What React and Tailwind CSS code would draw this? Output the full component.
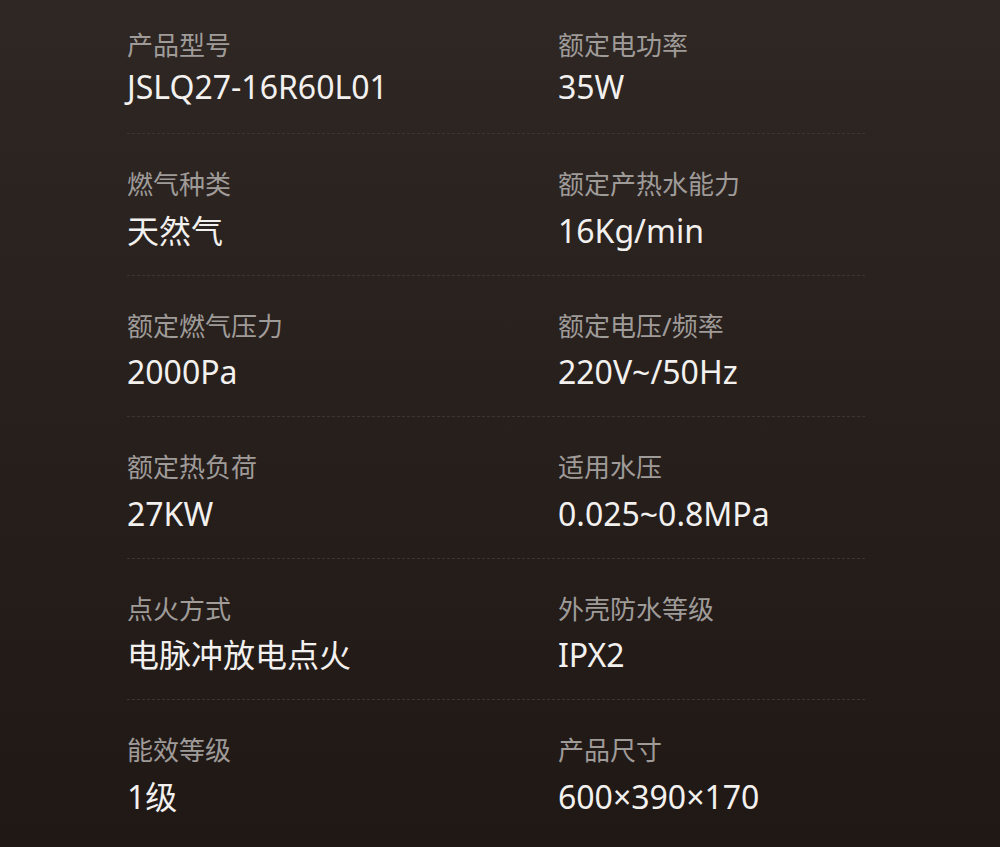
const ROWS = [
  [{ label: '产品型号', value: 'JSLQ27-16R60L01' }, { label: '额定电功率', value: '35W' }],
  [{ label: '燃气种类', value: '天然气' }, { label: '额定产热水能力', value: '16Kg/min' }],
  [{ label: '额定燃气压力', value: '2000Pa' }, { label: '额定电压/频率', value: '220V~/50Hz' }],
  [{ label: '额定热负荷', value: '27KW' }, { label: '适用水压', value: '0.025~0.8MPa' }],
  [{ label: '点火方式', value: '电脉冲放电点火' }, { label: '外壳防水等级', value: 'IPX2' }],
  [{ label: '能效等级', value: '1级' }, { label: '产品尺寸', value: '600×390×170' }],
];

const Cell = ({ label, value, first }) => (
  <div className="flex flex-col">
    <div className="h-[30px] leading-[30px] text-[26px] text-[#9f9b99] whitespace-nowrap">{label}</div>
    <div className={`h-[36px] leading-[36px] text-[32px] text-[#f3f1ef] whitespace-nowrap ${first ? 'mt-[9px]' : 'mt-[13.5px]'}`}>{value}</div>
  </div>
);

export default function App() {
  return (
    <div
      className="w-[1000px] h-[847px] overflow-hidden bg-gradient-to-b from-[#2e2723] to-[#201815] pl-[127px] pt-[30px]"
      style={{ fontFamily: '"Noto Sans", "Noto Sans CJK SC", sans-serif' }}
    >
      {ROWS.map((row, i) => (
        <div key={i} className={i === 0 ? '' : 'pt-[35px]'}>
          <div className="grid grid-cols-[431px_1fr]">
            <Cell {...row[0]} first={i === 0} />
            <Cell {...row[1]} first={i === 0} />
          </div>
          {i < ROWS.length - 1 && (
            <div className={`w-[738px] border-t border-dashed border-[#3d3531] ${i === 0 ? 'mt-[28px]' : 'mt-[26px]'}`} />
          )}
        </div>
      ))}
    </div>
  );
}
